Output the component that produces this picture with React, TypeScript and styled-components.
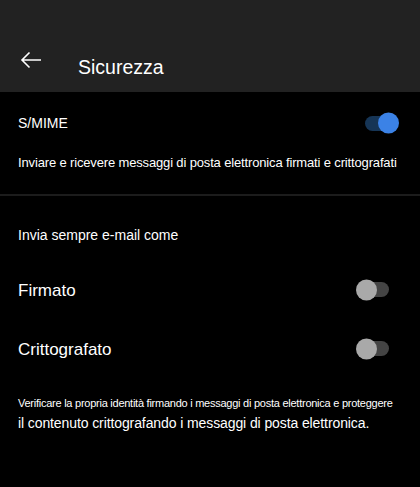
import React from "react";
import styled, { createGlobalStyle } from "styled-components";

const Global = createGlobalStyle`
  html, body { margin: 0; padding: 0; background: #000; }
  body { font-family: "Liberation Sans", Arial, sans-serif; color: #fff; }
`;

const Page = styled.div`
  width: 420px;
  height: 487px;
  background: #000;
  display: flex;
  flex-direction: column;
`;

const Header = styled.header`
  height: 92px;
  background: #222222;
  display: flex;
  align-items: flex-end;
  padding: 0 0 14px 20px;
  box-sizing: border-box;
  gap: 36px;
`;

const BackButton = styled.button`
  background: none;
  border: none;
  padding: 0;
  width: 22px;
  height: 22px;
  display: flex;
  align-items: center;
  justify-content: center;
  color: #fff;
  margin-bottom: 7px;
`;

const Title = styled.h1`
  margin: 0;
  font-size: 19.5px;
  font-weight: 400;
  color: #fff;
  line-height: 24px;
  margin-bottom: -1px;
`;

const Section = styled.section<{ $border?: boolean }>`
  padding: 0 18px;
  border-bottom: ${(p) => (p.$border ? "2px solid #1c1c1c" : "none")};
`;

const Row = styled.div<{ $h: number }>`
  height: ${(p) => p.$h}px;
  display: flex;
  align-items: center;
  justify-content: space-between;
`;

const Label = styled.span<{ $size: number }>`
  font-size: ${(p) => p.$size}px;
  color: #fff;
`;

const Desc = styled.p`
  margin: 0 0 22px;
  font-size: 13px;
  letter-spacing: -0.15px;
  line-height: 18px;
  color: #fff;
  white-space: nowrap;
`;

const Spacer = styled.div<{ $h: number }>`
  height: ${(p) => p.$h}px;
`;

const Track = styled.div<{ $on: boolean }>`
  position: relative;
  width: 30px;
  height: 15px;
  border-radius: 8px;
  background: ${(p) => (p.$on ? "#163556" : "#444444")};
  margin-right: ${(p) => (p.$on ? "7px" : "13px")};
  margin-top: ${(p) => (p.$on ? "0" : "-3px")};
`;

const Thumb = styled.div<{ $on: boolean }>`
  position: absolute;
  top: 50%;
  width: 21px;
  height: 21px;
  border-radius: 50%;
  transform: translateY(-50%);
  left: ${(p) => (p.$on ? "13px" : "-3px")};
  background: ${(p) => (p.$on ? "#3b82e6" : "#a9a9a9")};
`;

const Footer = styled.div`
  padding: 0 18px;
  margin-top: 27px;
`;

const FooterSmall = styled.div`
  font-size: 11px;
  line-height: 18px;
  letter-spacing: -0.25px;
  white-space: nowrap;
`;

const FooterLarge = styled.div`
  font-size: 14px;
  line-height: 23px;
  letter-spacing: -0.1px;
  white-space: nowrap;
`;

const Toggle = ({ on }: { on: boolean }) => (
  <Track $on={on}>
    <Thumb $on={on} />
  </Track>
);

export default function App() {
  return (
    <Page>
      <Global />
      <Header>
        <BackButton aria-label="Indietro">
          <svg width="22" height="18" viewBox="0 0 22 18" fill="none" stroke="#fff" strokeWidth="1.6">
            <path d="M21 9H2M9.5 1.5L2 9l7.5 7.5" />
          </svg>
        </BackButton>
        <Title>Sicurezza</Title>
      </Header>
      <Section $border>
        <Row $h={62}>
          <Label $size={14}>S/MIME</Label>
          <Toggle on />
        </Row>
        <Desc>Inviare e ricevere messaggi di posta elettronica firmati e crittografati</Desc>
      </Section>
      <Section>
        <Row $h={78}>
          <Label $size={14}>Invia sempre e-mail come</Label>
        </Row>
        <Row $h={34}>
          <Label $size={17}>Firmato</Label>
          <Toggle on={false} />
        </Row>
        <Spacer $h={25} />
        <Row $h={34}>
          <Label $size={17}>Crittografato</Label>
          <Toggle on={false} />
        </Row>
      </Section>
      <Footer>
        <FooterSmall>Verificare la propria identità firmando i messaggi di posta elettronica e proteggere</FooterSmall>
        <FooterLarge>il contenuto crittografando i messaggi di posta elettronica.</FooterLarge>
      </Footer>
    </Page>
  );
}
